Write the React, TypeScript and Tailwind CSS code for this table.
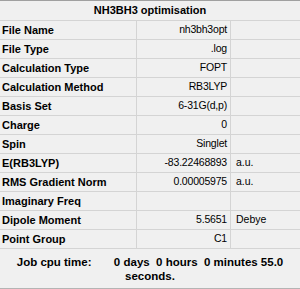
import React from 'react';

type Row = { label: string; value: string; unit?: string };

const rows: Row[] = [
    { label: 'File Name', value: 'nh3bh3opt' },
    { label: 'File Type', value: '.log' },
    { label: 'Calculation Type', value: 'FOPT' },
    { label: 'Calculation Method', value: 'RB3LYP' },
    { label: 'Basis Set', value: '6-31G(d,p)' },
    { label: 'Charge', value: '0' },
    { label: 'Spin', value: 'Singlet' },
    { label: 'E(RB3LYP)', value: '-83.22468893', unit: 'a.u.' },
    { label: 'RMS Gradient Norm', value: '0.00005975', unit: 'a.u.' },
    { label: 'Imaginary Freq', value: '' },
    { label: 'Dipole Moment', value: '5.5651', unit: 'Debye' },
    { label: 'Point Group', value: 'C1' },
];

const App: React.FC = () => {
    return (
        <div
            className="w-[300px] h-[289px] bg-[#f0f0f0] text-[11px] text-black overflow-hidden"
            style={{ fontFamily: '"Liberation Sans", Arial, sans-serif' }}
        >
            {/* Title */}
            <div className="h-[21px] border-t border-b border-t-[#a0a0a0] border-b-[#d4d4d4] flex items-center justify-center font-bold">
                NH3BH3 optimisation
            </div>

            {/* Summary rows */}
            {rows.map((row, index) => (
                <div key={index} className="h-[19px] flex border-b border-[#d4d4d4]">
                    <div className="w-[137px] border-r border-[#d4d4d4] flex items-center pl-[2px] font-bold">
                        {row.label}
                    </div>
                    <div className="w-[94px] border-r border-[#d4d4d4] flex items-center justify-end pr-[3px] text-[10.5px] tracking-[-0.2px]">
                        {row.value}
                    </div>
                    <div className="flex-1 flex items-center pl-[5px] text-[10.5px]">{row.unit}</div>
                </div>
            ))}

            {/* Job time */}
            <div className="h-[40px] border-b border-[#b4b4b4] flex items-center justify-center font-bold text-[11.5px] leading-[14px]">
                <p className="text-center whitespace-pre-wrap px-[8px]">
                    {'Job cpu time:       0 days  0 hours  0 minutes 55.0 seconds.'}
                </p>
            </div>
        </div>
    );
};

export default App;
